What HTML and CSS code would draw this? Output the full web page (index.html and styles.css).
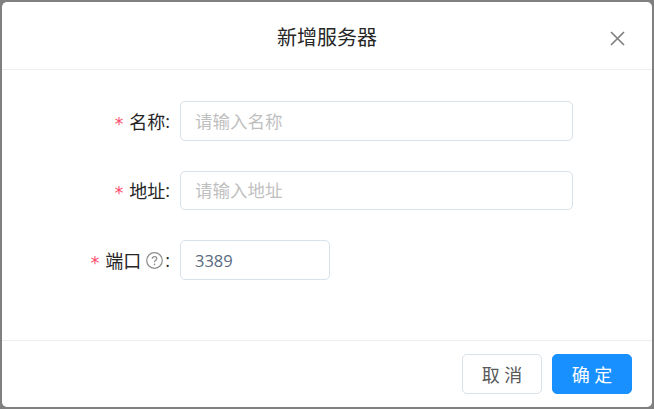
FILE: index.html
```html
<!DOCTYPE html>
<html lang="zh-CN">
<head>
  <meta charset="UTF-8">
  <meta name="viewport" content="width=device-width, initial-scale=1.0">
  <title>新增服务器</title>
  <link rel="stylesheet" href="styles.css">
</head>
<body>

  <div class="modal">
    <div class="modal-header">
      <div class="modal-title">新增服务器</div>
      <button class="modal-close" aria-label="Close">
        <svg width="15" height="15" viewBox="0 0 15 15"><path d="M1 1L14 14M14 1L1 14" stroke="#808080" stroke-width="1.7" fill="none"/></svg>
      </button>
    </div>

    <form class="modal-body">
      <div class="form-row">
        <label class="form-label"><span class="required">*</span><span>名称</span><span class="colon">:</span></label>
        <input class="form-input" type="text" placeholder="请输入名称">
      </div>
      <div class="form-row">
        <label class="form-label"><span class="required">*</span><span>地址</span><span class="colon">:</span></label>
        <input class="form-input" type="text" placeholder="请输入地址">
      </div>
      <div class="form-row">
        <label class="form-label"><span class="required">*</span><span>端口</span>
          <svg class="help-icon" width="17" height="17" viewBox="0 0 17 17">
            <circle cx="8.5" cy="8.5" r="7.8" stroke="#8c8c8c" stroke-width="1.2" fill="none"/>
            <path d="M6.2 6.7C6.2 5.4 7.2 4.6 8.5 4.6C9.8 4.6 10.8 5.4 10.8 6.6C10.8 8.2 8.5 8.3 8.5 10.2" stroke="#8c8c8c" stroke-width="1.2" fill="none"/>
            <circle cx="8.5" cy="12.4" r="0.8" fill="#8c8c8c"/>
          </svg><span class="colon">:</span></label>
        <input class="form-input form-input-small" type="text" value="3389">
      </div>
    </form>

    <div class="modal-footer">
      <button class="btn" type="button">取 消</button>
      <button class="btn btn-primary" type="button">确 定</button>
    </div>
  </div>

</body>
</html>
```

FILE: styles.css
```css
* {
  box-sizing: border-box;
}

html, body {
  height: 100%;
}

body {
  margin: 0;
  padding: 2px;
  overflow: hidden;
  background-color: #808080;
  font-family: "Open Sans", "Noto Sans CJK SC", sans-serif;
  font-size: 18px;
  color: #262626;
}

.modal {
  display: flex;
  flex-direction: column;
  height: 405px;
  background-color: #fff;
  border-radius: 5px;
}

.modal-header {
  position: relative;
  display: flex;
  align-items: center;
  justify-content: center;
  height: 68px;
  flex-shrink: 0;
  padding-top: 2px;
  border-bottom: 1px solid #ebeef2;
}

.modal-title {
  font-size: 20px;
  color: #262626;
}

.modal-close {
  position: absolute;
  top: 29px;
  right: 27px;
  display: flex;
  padding: 0;
  border: none;
  background: none;
}

.modal-body {
  flex: 1;
  display: flex;
  flex-direction: column;
  gap: 30px;
  padding-top: 31px;
}

.form-row {
  display: flex;
  align-items: center;
  height: 39.5px;
}

.form-label {
  display: flex;
  align-items: center;
  justify-content: flex-end;
  width: 178px;
  padding-right: 10px;
}

.required {
  margin: 7px 6px 0 0;
  color: #ff4d6a;
  font-family: "DejaVu Sans", sans-serif;
  font-size: 17px;
  line-height: 1;
}

.help-icon {
  margin: 1px 2px 0 5px;
}

.form-input {
  width: 393px;
  height: 100%;
  padding: 0 14px;
  border: 1px solid #d9e1ea;
  border-radius: 5px;
  outline: none;
  font-family: inherit;
  font-size: 17.5px;
  color: #5a6b82;
}

.form-input::placeholder {
  color: #bfbfbf;
}

.form-input-small {
  width: 150px;
  padding-top: 1px;
  font-size: 16.5px;
}

.modal-footer {
  display: flex;
  justify-content: flex-end;
  gap: 10px;
  height: 67px;
  flex-shrink: 0;
  padding: 13px 20px 0;
  border-top: 1px solid #ebeef2;
}

.btn {
  width: 80px;
  height: 40px;
  padding: 0;
  border: 1px solid #d9e1ea;
  border-radius: 5px;
  background-color: #fff;
  font-family: inherit;
  font-size: 18px;
  color: #595959;
}

.btn-primary {
  border-color: #1890ff;
  background-color: #1890ff;
  color: #fff;
}
```
